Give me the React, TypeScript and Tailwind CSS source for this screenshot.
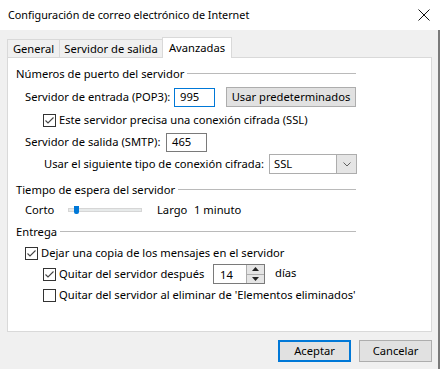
import type { ReactNode } from "react";

function CheckBox({ checked = false }: { checked?: boolean }) {
  return (
    <span className="flex size-[13px] shrink-0 items-center justify-center border border-[#333333] bg-white">
      {checked && (
        <svg width="11" height="11" viewBox="0 0 11 11" aria-hidden="true">
          <path d="M1.5 5.5 L4 8 L9.5 2.5" fill="none" stroke="#444444" strokeWidth="1.1" />
        </svg>
      )}
    </span>
  );
}

function GroupHeader({ title, className = "" }: { title: string; className?: string }) {
  return (
    <div className={"grid h-[16px] w-[340px] grid-cols-[auto_1fr] items-center gap-[3px] " + className}>
      <span>{title}</span>
      <div className="-mt-[2px] h-px w-full bg-[#bababa]" />
    </div>
  );
}

function DialogButton({ children, primary = false }: { children: ReactNode; primary?: boolean }) {
  return (
    <div
      className={
        primary
          ? "flex h-[22px] w-[73px] items-center justify-center border-2 border-[#0078d7] bg-[#e1e1e1]"
          : "flex h-[22px] w-[73px] items-center justify-center border border-[#adadad] bg-[#e1e1e1]"
      }
    >
      {children}
    </div>
  );
}

export default function App() {
  return (
    <div className="flex h-[369px] w-[440px] overflow-hidden whitespace-nowrap font-['Noto_Sans',sans-serif] text-[11.2px] leading-none text-black">
      <div className="flex w-[438px] flex-col bg-[#f0f0f0]">
        {/* title bar */}
        <div className="flex h-[30px] items-center justify-between bg-white pl-[8px] pr-[8px]">
          <span className="text-[10.8px]">Configuración de correo electrónico de Internet</span>
          <svg width="12" height="12" viewBox="0 0 12 12" aria-hidden="true">
            <path d="M0.5 0.5 L11.5 11.5 M11.5 0.5 L0.5 11.5" stroke="#111111" strokeWidth="1" />
          </svg>
        </div>

        {/* tabs */}
        <div className="mt-[7px] flex h-[20px] items-end pl-[7px]">
          <div className="flex h-[18px] w-[52px] items-center justify-center border-t border-l border-[#d9d9d9] bg-[#f0f0f0]">
            General
          </div>
          <div className="flex h-[18px] w-[103px] items-center justify-center border-t border-l border-[#d9d9d9] bg-[#f0f0f0]">
            Servidor de salida
          </div>
          <div className="relative z-10 -mb-px flex h-[21px] w-[70px] items-center justify-center border-x border-t border-[#d9d9d9] bg-white">
            Avanzadas
          </div>
        </div>

        {/* panel */}
        <div className="ml-[7px] flex h-[275px] w-[425px] flex-col border border-[#d9d9d9] bg-white pl-[8px]">
          <GroupHeader title="Números de puerto del servidor" className="mt-[8px]" />

          <div className="mt-[4px] flex h-[22px] items-center pl-[9px]">
            <span className="w-[149px]">Servidor de entrada (POP3):</span>
            <div className="flex h-[19px] w-[41px] items-center border border-[#0078d7] pl-[5px]">995</div>
            <div className="ml-[11px] flex h-[20px] w-[130px] items-center justify-center border border-[#adadad] bg-[#e1e1e1]">
              Usar predeterminados
            </div>
          </div>

          <div className="mt-[4px] flex h-[16px] items-center gap-[3px] pl-[27px]">
            <CheckBox checked />
            <span>Este servidor precisa una conexión cifrada (SSL)</span>
          </div>

          <div className="mt-[4px] flex h-[20px] items-center pl-[9px]">
            <span className="w-[141px]">Servidor de salida (SMTP):</span>
            <div className="flex h-[19px] w-[41px] items-center border border-[#7a7a7a] pl-[5px]">465</div>
          </div>

          <div className="mt-[2px] flex h-[20px] items-center pl-[28px]">
            <span className="w-[225px]">Usar el siguiente tipo de conexión cifrada:</span>
            <div className="flex h-[20px] w-[88px] items-center border border-[#adadad] bg-white">
              <span className="flex-1 pl-[4px]">SSL</span>
              <span className="flex h-full w-[20px] items-center justify-center border-l border-[#adadad] bg-[#e5e5e5]">
                <svg width="8" height="5" viewBox="0 0 8 5" aria-hidden="true">
                  <path d="M0.5 0.5 L4 4 L7.5 0.5" fill="none" stroke="#606060" strokeWidth="1" />
                </svg>
              </span>
            </div>
          </div>

          <GroupHeader title="Tiempo de espera del servidor" className="mt-[8px]" />

          <div className="mt-[4px] flex h-[16px] items-center pl-[9px]">
            <span className="w-[43px]">Corto</span>
            <div className="relative flex h-[8px] w-[74px] items-center">
              <div className="h-[4px] w-full border border-[#d6d6d6] bg-[#e7eaea]" />
              <div className="absolute top-0 left-[6px] h-[8px] w-[5px] rounded-b-[2px] bg-[#0078d7]" />
            </div>
            <span className="ml-[15px] w-[37px]">Largo</span>
            <span>1 minuto</span>
          </div>

          <GroupHeader title="Entrega" className="mt-[6px]" />

          <div className="mt-[5px] flex h-[16px] items-center gap-[3px] pl-[9px]">
            <CheckBox checked />
            <span>Dejar una copia de los mensajes en el servidor</span>
          </div>

          <div className="mt-[3px] flex h-[20px] items-center pl-[27px]">
            <CheckBox checked />
            <span className="ml-[3px] w-[154px]">Quitar del servidor después</span>
            <div className="flex h-[20px] w-[52px] items-stretch border border-[#7a7a7a] bg-white">
              <span className="flex flex-1 items-center pl-[6px] pt-[1px]">14</span>
              <span className="flex w-[18px] flex-col border-l border-[#adadad]">
                <span className="flex flex-1 items-center justify-center border-b border-[#adadad] bg-[#e5e5e5]">
                  <svg width="7" height="4" viewBox="0 0 7 4" aria-hidden="true">
                    <path d="M0 4 L3.5 0 L7 4 Z" fill="#222222" />
                  </svg>
                </span>
                <span className="flex flex-1 items-center justify-center bg-[#e5e5e5]">
                  <svg width="7" height="4" viewBox="0 0 7 4" aria-hidden="true">
                    <path d="M0 0 L3.5 4 L7 0 Z" fill="#222222" />
                  </svg>
                </span>
              </span>
            </div>
            <span className="ml-[10px] -mt-[3px]">días</span>
          </div>

          <div className="mt-[3px] flex h-[16px] items-center gap-[3px] pl-[27px]">
            <CheckBox />
            <span>Quitar del servidor al eliminar de 'Elementos eliminados'</span>
          </div>
        </div>

        {/* buttons */}
        <div className="mt-[8px] flex justify-end gap-[8px] pr-[6px]">
          <DialogButton primary>Aceptar</DialogButton>
          <DialogButton>Cancelar</DialogButton>
        </div>
      </div>
      <div className="flex w-[2px] flex-col">
        <div className="h-[30px] bg-white" />
        <div className="flex-1 bg-[#7a7a7a]" />
      </div>
    </div>
  );
}
